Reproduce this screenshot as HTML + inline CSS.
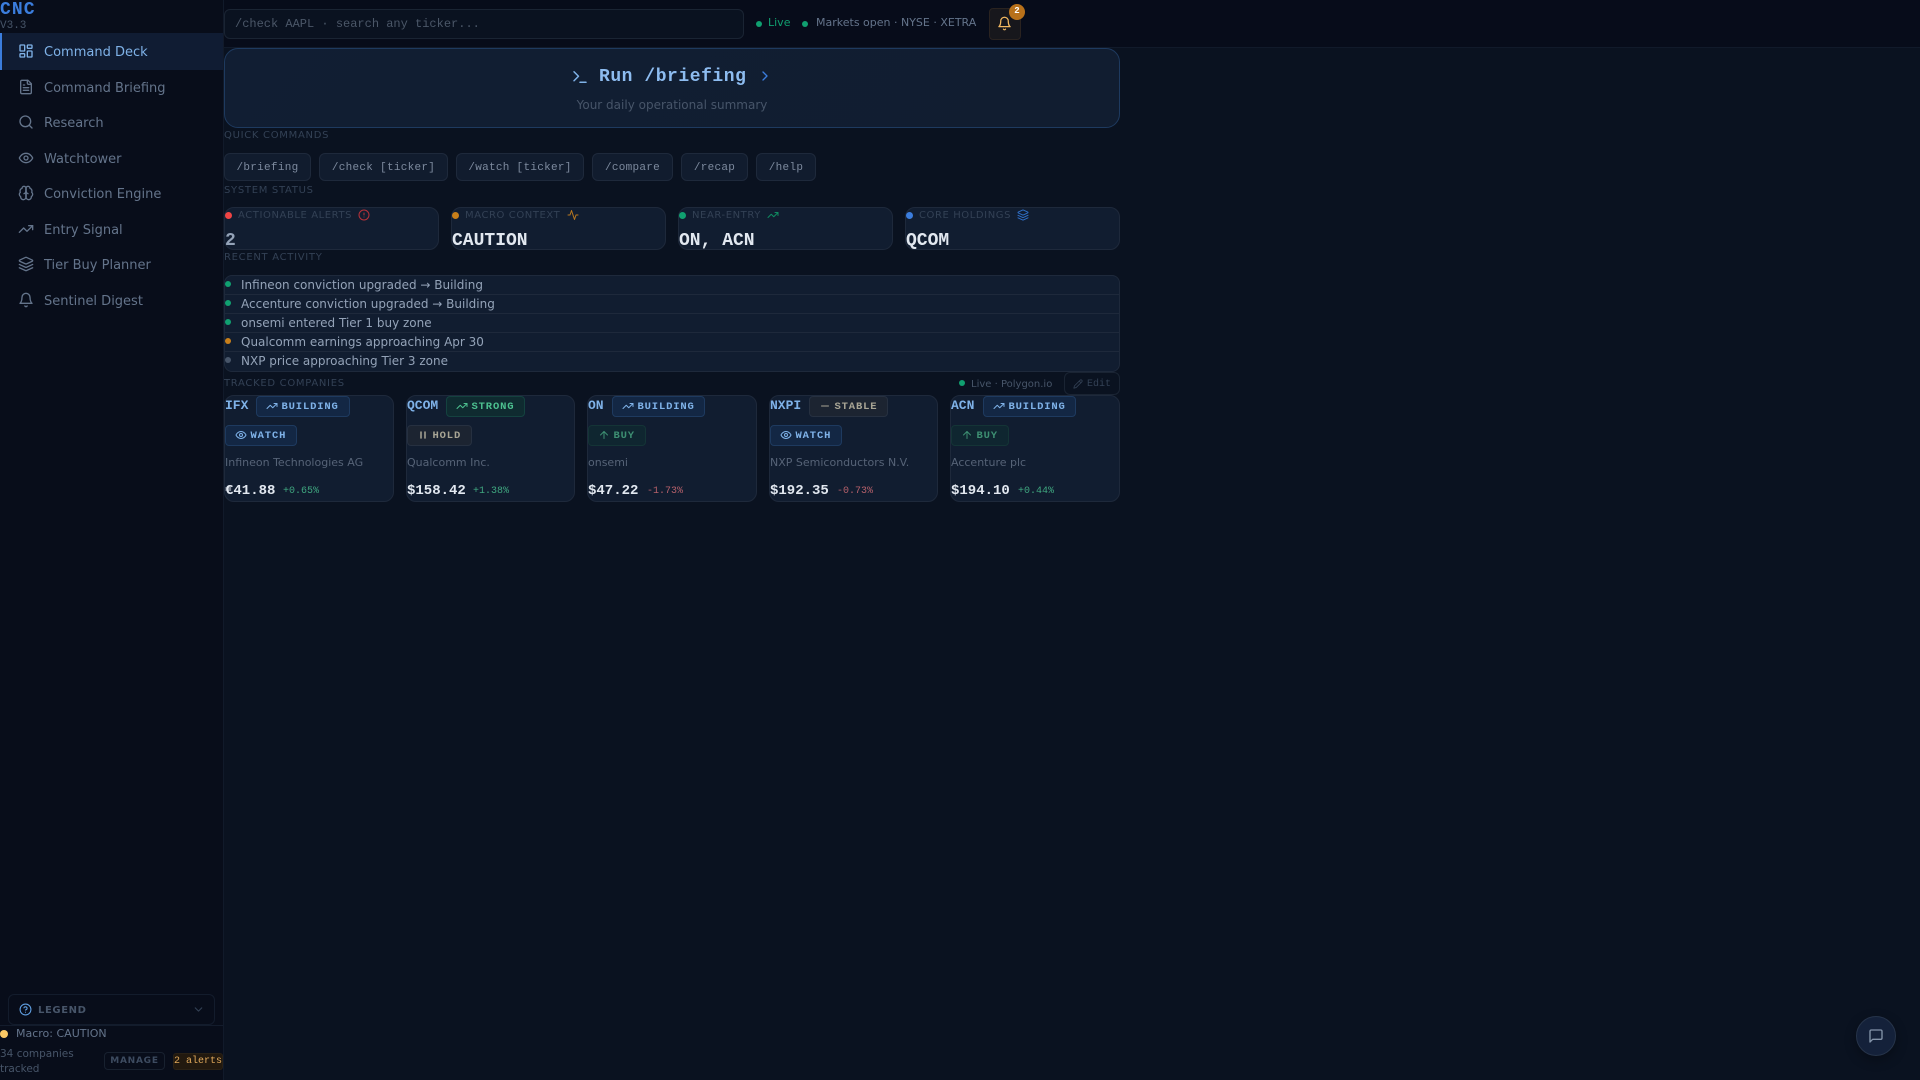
<!DOCTYPE html>
<html lang="en"><head><meta charset="utf-8"><title>CNC</title>
<style>
*{box-sizing:border-box;margin:0;padding:0}
html,body{width:1920px;height:1080px;overflow:hidden;background:#0a1220;font-family:"DejaVu Sans","Liberation Sans",sans-serif;color:#94a3b8}
.a{position:absolute;white-space:nowrap}
.m{font-family:"Liberation Mono",monospace}
svg{fill:none;stroke:currentColor;stroke-width:2;stroke-linecap:round;stroke-linejoin:round;display:block}
#side{left:0;top:0;width:224px;height:1080px;background:#080d1a;border-right:1px solid #111a2a}
#top{left:224px;top:0;width:1696px;height:48px;background:#070c1a;border-bottom:1px solid #111a2a}
.nav{left:44px;font-size:13px;line-height:16px;color:#64748b}
.ic{color:#64748b}
.lab{left:224px;font-size:10px;line-height:12px;letter-spacing:.7px;color:#334155}
.cmd{top:153px;height:28px;background:#111c2e;border:1px solid #1e293b;border-radius:6px;font:11px/28px "Liberation Mono",monospace;letter-spacing:.28px;color:#7d8a9e;text-align:center}
.st{top:207px;height:43px;width:215px;background:#111d30;border:1px solid #1e293b;border-radius:10px}
.dot{border-radius:50%}
.sl{font-size:10px;line-height:12px;letter-spacing:.58px;color:#334155;top:210px}
.sv{font:bold 18px/20px "Liberation Mono",monospace;color:#e2e8f0;top:231px}
.ar{left:241px;font-size:12px;line-height:16px;color:#94a3b8}
.rl{left:225px;width:894px;height:1px;background:#1e293b}
.card{top:395px;height:107px;background:#111d30;border:1px solid #1e293b;border-radius:10px}
.tk{font:bold 13px/16px "Liberation Mono",monospace;color:#7fb2e8;top:398px}
.b{height:21px;border-radius:4px;font:bold 10.5px/20px "Liberation Mono",monospace;letter-spacing:.85px;border:1px solid;padding-left:24.5px}
.b svg{position:absolute;left:9px;top:3px}
.bl{background:#132744;border-color:#1e3a5f;color:#7fb2e8}
.gr{background:#0f2b30;border-color:#14423f;color:#4cc08f}
.dg{background:#0f2630;border-color:#143436;color:#3d8f72}
.gy{background:#1c2431;border-color:#263040;color:#a8a595}
.nm{font-size:11px;line-height:14px;color:#566377;top:456px}
.pr{font:bold 14px/16px "Liberation Mono",monospace;color:#e2e8f0;top:483px}
.ch{font:10px/12px "Liberation Mono",monospace;top:486px}
.up{color:#3fa67f}.dn{color:#b5606a}
</style></head><body>

<div class="a" id="side"></div>
<div class="a m" style="left:0;top:1px;font-size:18px;font-weight:bold;line-height:18px;letter-spacing:1.1px;color:#3b7ddd">CNC</div>
<div class="a m" style="left:0;top:19px;font-size:11px;line-height:13px;letter-spacing:0;color:#475569;padding-top:1px">V3.3</div>
<div class="a" style="left:0;top:33px;width:223px;height:37px;background:#101c33;border-left:2px solid #3b7ddd"></div>

<svg class="a ic" style="left:18px;top:43px;color:#7fb2e8" width="16" height="16" viewBox="0 0 24 24"><rect width="7" height="9" x="3" y="3" rx="1"/><rect width="7" height="5" x="14" y="3" rx="1"/><rect width="7" height="9" x="14" y="12" rx="1"/><rect width="7" height="5" x="3" y="16" rx="1"/></svg>
<div class="a nav" style="top:45px;color:#7fb2e8">Command Deck</div>
<svg class="a ic" style="left:18px;top:79px" width="16" height="16" viewBox="0 0 24 24"><path d="M15 2H6a2 2 0 0 0-2 2v16a2 2 0 0 0 2 2h12a2 2 0 0 0 2-2V7Z"/><path d="M14 2v4a2 2 0 0 0 2 2h4"/><path d="M10 9H8"/><path d="M16 13H8"/><path d="M16 17H8"/></svg>
<div class="a nav" style="top:81px">Command Briefing</div>
<svg class="a ic" style="left:18px;top:114px" width="16" height="16" viewBox="0 0 24 24"><circle cx="11" cy="11" r="8"/><path d="m21 21-4.3-4.3"/></svg>
<div class="a nav" style="top:116px">Research</div>
<svg class="a ic" style="left:18px;top:150px" width="16" height="16" viewBox="0 0 24 24"><path d="M2 12s3-7 10-7 10 7 10 7-3 7-10 7-10-7-10-7Z"/><circle cx="12" cy="12" r="3"/></svg>
<div class="a nav" style="top:152px">Watchtower</div>
<svg class="a ic" style="left:18px;top:185px" width="16" height="16" viewBox="0 0 24 24"><path d="M12 5a3 3 0 1 0-5.997.125 4 4 0 0 0-2.526 5.77 4 4 0 0 0 .556 6.588A4 4 0 1 0 12 18Z"/><path d="M12 5a3 3 0 1 1 5.997.125 4 4 0 0 1 2.526 5.77 4 4 0 0 1-.556 6.588A4 4 0 1 1 12 18Z"/><path d="M15 13a4.5 4.5 0 0 1-3-4 4.5 4.5 0 0 1-3 4"/><path d="M12 5v13"/></svg>
<div class="a nav" style="top:187px">Conviction Engine</div>
<svg class="a ic" style="left:18px;top:221px" width="16" height="16" viewBox="0 0 24 24"><polyline points="22 7 13.5 15.5 8.5 10.5 2 17"/><polyline points="16 7 22 7 22 13"/></svg>
<div class="a nav" style="top:223px">Entry Signal</div>
<svg class="a ic" style="left:18px;top:256px" width="16" height="16" viewBox="0 0 24 24"><path d="m12.83 2.18a2 2 0 0 0-1.66 0L2.6 6.08a1 1 0 0 0 0 1.83l8.58 3.91a2 2 0 0 0 1.66 0l8.58-3.9a1 1 0 0 0 0-1.83Z"/><path d="m22 17.65-9.17 4.16a2 2 0 0 1-1.66 0L2 17.65"/><path d="m22 12.65-9.17 4.16a2 2 0 0 1-1.66 0L2 12.65"/></svg>
<div class="a nav" style="top:258px">Tier Buy Planner</div>
<svg class="a ic" style="left:18px;top:292px" width="16" height="16" viewBox="0 0 24 24"><path d="M6 8a6 6 0 0 1 12 0c0 7 3 9 3 9H3s3-2 3-9"/><path d="M10.3 21a1.94 1.94 0 0 0 3.4 0"/></svg>
<div class="a nav" style="top:294px">Sentinel Digest</div>

<div class="a" style="left:8px;top:994px;width:207px;height:31px;border:1px solid #131c2c;border-radius:6px"></div>
<svg class="a" style="left:19px;top:1003px;color:#5f9ee0" width="13" height="13" viewBox="0 0 24 24"><circle cx="12" cy="12" r="10"/><path d="M9.09 9a3 3 0 0 1 5.83 1c0 2-3 3-3 3"/><path d="M12 17h.01"/></svg>
<div class="a" style="left:38px;top:1003px;font-size:10px;font-weight:bold;line-height:15px;letter-spacing:.6px;color:#475569">LEGEND</div>
<svg class="a" style="left:192px;top:1003px;color:#334155" width="13" height="13" viewBox="0 0 24 24"><path d="m6 9 6 6 6-6"/></svg>
<div class="a" style="left:0;top:1025px;width:223px;height:1px;background:#131c2c"></div>
<div class="a dot" style="left:0;top:1030px;width:8px;height:8px;background:#fbc965"></div>
<div class="a" style="left:16px;top:1026px;font-size:11px;line-height:16px;color:#64748b">Macro: CAUTION</div>
<div class="a" style="left:0;top:1047px;font-size:10.5px;line-height:15px;color:#475569">34 companies<br>tracked</div>
<div class="a" style="left:104px;top:1052px;width:61px;height:18px;border:1px solid #18212f;border-radius:4px;font-size:9px;font-weight:bold;line-height:17px;letter-spacing:.75px;color:#3d4b60;text-align:center">MANAGE</div>
<div class="a m" style="left:173px;top:1053px;width:50px;height:17px;background:#22190f;border:1px solid #2a2115;border-radius:3px;font-size:10px;line-height:16px;color:#e0a85a;text-align:center;overflow:hidden">2 alerts</div>

<div class="a" id="top"></div>
<div class="a m" style="left:224px;top:9px;width:520px;height:30px;background:#0a1220;border:1px solid #1a2433;border-radius:6px;padding-left:10px;font-size:12px;line-height:29px;color:#4b5768">/check AAPL · search any ticker...</div>
<div class="a dot" style="left:756px;top:21px;width:6px;height:6px;background:#10a070"></div>
<div class="a" style="left:768px;top:16px;font-size:11px;line-height:14px;color:#10a070">Live</div>
<div class="a dot" style="left:802px;top:21px;width:6px;height:6px;background:#10a070"></div>
<div class="a" style="left:816px;top:16px;font-size:11px;line-height:14px;color:#64748b">Markets open · NYSE · XETRA</div>
<div class="a" style="left:989px;top:8px;width:32px;height:32px;background:#17171c;border:1px solid #2a2320;border-radius:4px"></div>
<svg class="a" style="left:997px;top:16px;color:#f2b860" width="15" height="15" viewBox="0 0 24 24"><path d="M6 8a6 6 0 0 1 12 0c0 7 3 9 3 9H3s3-2 3-9"/><path d="M10.3 21a1.94 1.94 0 0 0 3.4 0"/></svg>
<div class="a m dot" style="left:1009px;top:4px;width:16px;height:16px;background:#b8711a;color:#fff;font-size:9px;font-weight:bold;line-height:15px;text-align:center">2</div>

<div class="a" style="left:224px;top:48px;width:896px;height:80px;background:linear-gradient(135deg,#111e33,#111d30);border:1px solid #1e3a5f;border-radius:14px"></div>
<svg class="a" style="left:571px;top:68px;color:#7fb2e8" width="18" height="18" viewBox="0 0 24 24"><polyline points="4 17 10 11 4 5"/><line x1="12" y1="19" x2="20" y2="19"/></svg>
<div class="a m" style="left:599px;top:67px;font-size:18px;font-weight:bold;line-height:20px;letter-spacing:.54px;color:#8dbcf0">Run /briefing</div>
<svg class="a" style="left:757px;top:68px;color:#3b7ddd" width="16" height="16" viewBox="0 0 24 24"><path d="m9 18 6-6-6-6"/></svg>
<div class="a" style="left:224px;width:896px;top:97px;font-size:12px;line-height:16px;text-align:center;color:#475569">Your daily operational summary</div>

<div class="a lab" style="top:130px">QUICK COMMANDS</div>
<div class="a cmd" style="left:224px;width:87px">/briefing</div>
<div class="a cmd" style="left:319px;width:129px">/check [ticker]</div>
<div class="a cmd" style="left:456px;width:128px">/watch [ticker]</div>
<div class="a cmd" style="left:592px;width:81px">/compare</div>
<div class="a cmd" style="left:681px;width:67px">/recap</div>
<div class="a cmd" style="left:756px;width:60px">/help</div>

<div class="a lab" style="top:185px">SYSTEM STATUS</div>
<div class="a st" style="left:224px"></div>
<div class="a dot" style="left:225px;top:212px;width:7px;height:7px;background:#ef4444"></div>
<div class="a sl" style="left:238px">ACTIONABLE ALERTS</div>
<svg class="a" style="left:358px;top:209px;color:#b8323a" width="12" height="12" viewBox="0 0 24 24"><circle cx="12" cy="12" r="10"/><line x1="12" y1="8" x2="12" y2="12"/><line x1="12" y1="16" x2="12.01" y2="16"/></svg>
<div class="a sv" style="left:225px;color:#94a3b8">2</div>
<div class="a st" style="left:451px"></div>
<div class="a dot" style="left:452px;top:212px;width:7px;height:7px;background:#c87f1a"></div>
<div class="a sl" style="left:465px">MACRO CONTEXT</div>
<svg class="a" style="left:567px;top:209px;color:#b8771f" width="12" height="12" viewBox="0 0 24 24"><path d="M22 12h-4l-3 9L9 3l-3 9H2"/></svg>
<div class="a sv" style="left:452px">CAUTION</div>
<div class="a st" style="left:678px"></div>
<div class="a dot" style="left:679px;top:212px;width:7px;height:7px;background:#10a070"></div>
<div class="a sl" style="left:692px">NEAR-ENTRY</div>
<svg class="a" style="left:767px;top:209px;color:#0f8a60" width="12" height="12" viewBox="0 0 24 24"><polyline points="22 7 13.5 15.5 8.5 10.5 2 17"/><polyline points="16 7 22 7 22 13"/></svg>
<div class="a sv" style="left:679px">ON, ACN</div>
<div class="a st" style="left:905px"></div>
<div class="a dot" style="left:906px;top:212px;width:7px;height:7px;background:#3b7ddd"></div>
<div class="a sl" style="left:919px">CORE HOLDINGS</div>
<svg class="a" style="left:1017px;top:209px;color:#2f6fc8" width="12" height="12" viewBox="0 0 24 24"><path d="m12.83 2.18a2 2 0 0 0-1.66 0L2.6 6.08a1 1 0 0 0 0 1.83l8.58 3.91a2 2 0 0 0 1.66 0l8.58-3.9a1 1 0 0 0 0-1.83Z"/><path d="m22 17.65-9.17 4.16a2 2 0 0 1-1.66 0L2 17.65"/><path d="m22 12.65-9.17 4.16a2 2 0 0 1-1.66 0L2 12.65"/></svg>
<div class="a sv" style="left:906px">QCOM</div>

<div class="a lab" style="top:252px">RECENT ACTIVITY</div>
<div class="a" style="left:224px;top:275px;width:896px;height:97px;background:#111d30;border:1px solid #1e293b;border-radius:8px"></div>
<div class="a rl" style="top:294px"></div><div class="a rl" style="top:313px"></div><div class="a rl" style="top:332px"></div><div class="a rl" style="top:351px"></div>
<div class="a dot" style="left:225px;top:281px;width:6px;height:6px;background:#10a070"></div>
<div class="a ar" style="top:277px">Infineon conviction upgraded → Building</div>
<div class="a dot" style="left:225px;top:300px;width:6px;height:6px;background:#10a070"></div>
<div class="a ar" style="top:296px">Accenture conviction upgraded → Building</div>
<div class="a dot" style="left:225px;top:319px;width:6px;height:6px;background:#10a070"></div>
<div class="a ar" style="top:315px">onsemi entered Tier 1 buy zone</div>
<div class="a dot" style="left:225px;top:338px;width:6px;height:6px;background:#c87f1a"></div>
<div class="a ar" style="top:334px">Qualcomm earnings approaching Apr 30</div>
<div class="a dot" style="left:225px;top:357px;width:6px;height:6px;background:#475569"></div>
<div class="a ar" style="top:353px">NXP price approaching Tier 3 zone</div>

<div class="a lab" style="top:378px">TRACKED COMPANIES</div>
<div class="a dot" style="left:959px;top:380px;width:6px;height:6px;background:#10a070"></div>
<div class="a" style="left:971px;top:377px;font-size:10px;line-height:15px;color:#475569">Live · Polygon.io</div>
<div class="a" style="left:1064px;top:372px;width:56px;height:23px;border:1px solid #1a2433;border-radius:6px"></div>
<svg class="a" style="left:1073px;top:379px;color:#334155" width="10" height="10" viewBox="0 0 24 24"><path d="M17 3a2.85 2.83 0 1 1 4 4L7.5 20.5 2 22l1.5-5.5Z"/><path d="m15 5 4 4"/></svg>
<div class="a m" style="left:1087px;top:379px;font-size:10px;line-height:12px;color:#334155">Edit</div>

<!-- IFX -->
<div class="a card" style="left:224px;width:170px"></div>
<div class="a tk" style="left:225px">IFX</div>
<div class="a b bl" style="left:256px;top:396px;width:94px"><svg width="12" height="12" viewBox="0 0 24 24"><polyline points="22 7 13.5 15.5 8.5 10.5 2 17"/><polyline points="16 7 22 7 22 13"/></svg>BUILDING</div>
<div class="a b bl" style="left:225px;top:425px;width:72px"><svg width="12" height="12" viewBox="0 0 24 24"><path d="M2 12s3-7 10-7 10 7 10 7-3 7-10 7-10-7-10-7Z"/><circle cx="12" cy="12" r="3"/></svg>WATCH</div>
<div class="a nm" style="left:225px">Infineon Technologies AG</div>
<div class="a pr" style="left:225px">€41.88</div>
<div class="a ch up" style="left:283px">+0.65%</div>

<!-- QCOM -->
<div class="a card" style="left:406px;width:169px"></div>
<div class="a tk" style="left:407px">QCOM</div>
<div class="a b gr" style="left:446px;top:396px;width:79px"><svg width="12" height="12" viewBox="0 0 24 24"><polyline points="22 7 13.5 15.5 8.5 10.5 2 17"/><polyline points="16 7 22 7 22 13"/></svg>STRONG</div>
<div class="a b gy" style="left:407px;top:425px;width:65px"><svg width="12" height="12" viewBox="0 0 24 24"><path d="M8 6v12" stroke-width="3"/><path d="M16 6v12" stroke-width="3"/></svg>HOLD</div>
<div class="a nm" style="left:407px">Qualcomm Inc.</div>
<div class="a pr" style="left:407px">$158.42</div>
<div class="a ch up" style="left:473px">+1.38%</div>

<!-- ON -->
<div class="a card" style="left:587px;width:170px"></div>
<div class="a tk" style="left:588px">ON</div>
<div class="a b bl" style="left:612px;top:396px;width:93px"><svg width="12" height="12" viewBox="0 0 24 24"><polyline points="22 7 13.5 15.5 8.5 10.5 2 17"/><polyline points="16 7 22 7 22 13"/></svg>BUILDING</div>
<div class="a b dg" style="left:588px;top:425px;width:58px"><svg width="12" height="12" viewBox="0 0 24 24"><path d="m5 12 7-7 7 7"/><path d="M12 19V5"/></svg>BUY</div>
<div class="a nm" style="left:588px">onsemi</div>
<div class="a pr" style="left:588px">$47.22</div>
<div class="a ch dn" style="left:647px">-1.73%</div>

<!-- NXPI -->
<div class="a card" style="left:769px;width:169px"></div>
<div class="a tk" style="left:770px">NXPI</div>
<div class="a b gy" style="left:809px;top:396px;width:79px"><svg width="12" height="12" viewBox="0 0 24 24"><path d="M5 12h14"/></svg>STABLE</div>
<div class="a b bl" style="left:770px;top:425px;width:72px"><svg width="12" height="12" viewBox="0 0 24 24"><path d="M2 12s3-7 10-7 10 7 10 7-3 7-10 7-10-7-10-7Z"/><circle cx="12" cy="12" r="3"/></svg>WATCH</div>
<div class="a nm" style="left:770px">NXP Semiconductors N.V.</div>
<div class="a pr" style="left:770px">$192.35</div>
<div class="a ch dn" style="left:837px">-0.73%</div>

<!-- ACN -->
<div class="a card" style="left:950px;width:170px"></div>
<div class="a tk" style="left:951px">ACN</div>
<div class="a b bl" style="left:983px;top:396px;width:93px"><svg width="12" height="12" viewBox="0 0 24 24"><polyline points="22 7 13.5 15.5 8.5 10.5 2 17"/><polyline points="16 7 22 7 22 13"/></svg>BUILDING</div>
<div class="a b dg" style="left:951px;top:425px;width:58px"><svg width="12" height="12" viewBox="0 0 24 24"><path d="m5 12 7-7 7 7"/><path d="M12 19V5"/></svg>BUY</div>
<div class="a nm" style="left:951px">Accenture plc</div>
<div class="a pr" style="left:951px">$194.10</div>
<div class="a ch up" style="left:1018px">+0.44%</div>

<div class="a dot" style="left:1856px;top:1016px;width:40px;height:40px;background:#14213a;border:1px solid #26344a;box-shadow:0 4px 12px rgba(0,0,0,.3)"></div>
<svg class="a" style="left:1868px;top:1028px;color:#8494aa" width="16" height="16" viewBox="0 0 24 24"><path d="M21 15a2 2 0 0 1-2 2H7l-4 4V5a2 2 0 0 1 2-2h14a2 2 0 0 1 2 2z"/></svg>
</body></html>
